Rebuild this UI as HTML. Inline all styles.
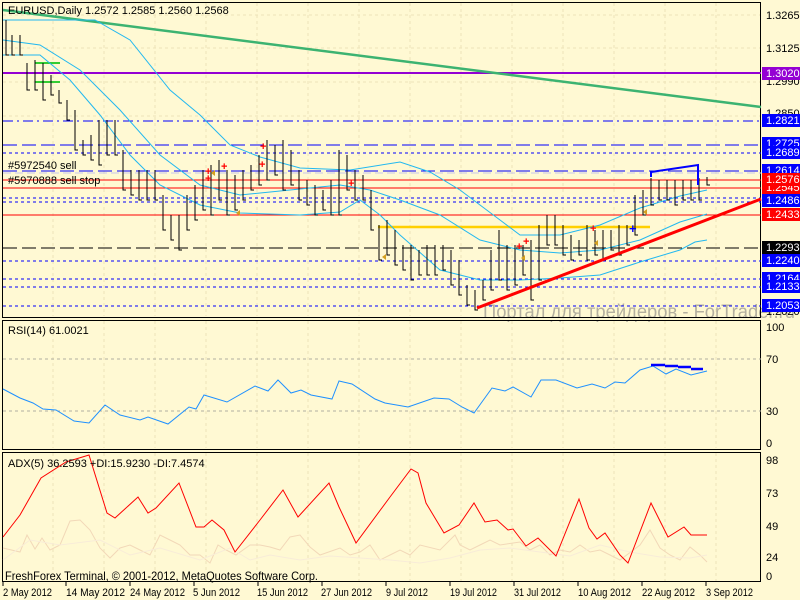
<!DOCTYPE html><html><head><meta charset="utf-8"><style>
body{margin:0;background:#FFF9D3;width:800px;height:600px;overflow:hidden;font-family:"Liberation Sans",sans-serif}
svg{display:block}
text{font-family:"Liberation Sans","DejaVu Sans",sans-serif;font-size:11px}
</style></head><body>
<svg width="800" height="600" viewBox="0 0 800 600" xmlns="http://www.w3.org/2000/svg">
<rect width="800" height="600" fill="#FFF9D3"/>
<g stroke="#EDE4B8" stroke-dasharray="3,3" stroke-width="1">
<path d="M53 3V316M104 3V316M155 3V316M206 3V316M257 3V316M308 3V316M359 3V316M410 3V316M461 3V316M512 3V316M563 3V316M614 3V316M665 3V316M716 3V316"/>
<path d="M53 321V448M104 321V448M155 321V448M206 321V448M257 321V448M308 321V448M359 321V448M410 321V448M461 321V448M512 321V448M563 321V448M614 321V448M665 321V448M716 321V448"/>
<path d="M53 453V581M104 453V581M155 453V581M206 453V581M257 453V581M308 453V581M359 453V581M410 453V581M461 453V581M512 453V581M563 453V581M614 453V581M665 453V581M716 453V581"/>
<path d="M3 15H760M3 48H760M3 82H760M3 116H760"/>
</g>
<text x="483" y="318" fill="#B4B0A0" style="font-size:19px" textLength="312" lengthAdjust="spacingAndGlyphs">Портал для трейдеров - ForTrader.ru</text>
<rect x="0" y="318" width="800" height="2" fill="#FFF9D3"/>
<g fill="none" stroke="#000" stroke-width="1">
<rect x="2.5" y="2.5" width="758" height="315"/>
<rect x="2.5" y="320.5" width="758" height="129"/>
<rect x="2.5" y="452.5" width="758" height="129"/>
</g>
<line x1="3" y1="73" x2="761" y2="73" stroke="#9400D3" stroke-width="2"/>
<line x1="3" y1="121" x2="761" y2="121" stroke="#0000FF" stroke-dasharray="10,4,2,4"/>
<line x1="3" y1="145" x2="761" y2="145" stroke="#0000FF" stroke-dasharray="14,5"/>
<line x1="3" y1="153" x2="761" y2="153" stroke="#0000FF" stroke-dasharray="3,3"/>
<line x1="3" y1="171" x2="761" y2="171" stroke="#0000FF" stroke-dasharray="14,5"/>
<line x1="3" y1="173" x2="761" y2="173" stroke="#C8C8E8" stroke-dasharray="8,4"/>
<line x1="3" y1="180" x2="761" y2="180" stroke="#FF0000"/>
<line x1="3" y1="188" x2="761" y2="188" stroke="#FF0000"/>
<line x1="3" y1="198" x2="761" y2="198" stroke="#0000FF" stroke-dasharray="3,3"/>
<line x1="3" y1="202" x2="761" y2="202" stroke="#0000FF" stroke-dasharray="3,3"/>
<line x1="3" y1="215" x2="761" y2="215" stroke="#FF0000"/>
<line x1="3" y1="248" x2="761" y2="248" stroke="#000" stroke-dasharray="14,5"/>
<line x1="3" y1="261" x2="761" y2="261" stroke="#0000FF" stroke-dasharray="3,3"/>
<line x1="3" y1="279" x2="761" y2="279" stroke="#0000FF" stroke-dasharray="3,3"/>
<line x1="3" y1="287" x2="761" y2="287" stroke="#0000FF" stroke-dasharray="3,3"/>
<line x1="3" y1="306" x2="761" y2="306" stroke="#0000FF" stroke-dasharray="3,3"/>
<line x1="3" y1="10" x2="761" y2="107" stroke="#3CB371" stroke-width="2.5"/>
<path d="M35 63H60M35 82H60" stroke="#33CC33" stroke-width="2"/>
<line x1="378" y1="227" x2="650" y2="227" stroke="#FFD000" stroke-width="2.5"/>
<g fill="none" stroke="#22B8F0" stroke-width="1">
<polyline points="3,20 95,20 130,40 170,90 200,115 230,145 260,157 300,168 350,170 400,162 430,172 460,190 500,220 520,235 560,235 600,225 640,208 680,196 707,190"/>
<polyline points="3,40 40,45 80,70 120,110 160,155 200,185 240,195 290,190 340,185 370,190 400,200 440,215 480,240 520,250 560,253 600,250 640,240 680,222 707,214"/>
<polyline points="3,55 40,55 70,80 100,115 130,155 160,185 200,205 240,213 300,215 340,212 360,200 380,215 400,235 440,270 480,280 520,280 560,278 600,275 640,262 680,250 695,242 707,240"/>
</g>
<path fill="none" stroke="#000" stroke-width="1" d="M6 20V55h3M12 35V55h3M20 35V55h3M27 63V90h3M35 60V90h3M43 63V100h3M51 75V95h3M59 90V103h3M67 100V120h3M75 110V150h3M83 140V155h3M91 135V160h3M99 120V165h3M107 120V155h3M115 120V155h3M123 150V190h3M131 170V195h3M139 170V200h3M147 170V200h3M155 170V200h3M163 195V230h3M171 215V240h3M179 215V250h3M187 195V230h3M195 185V220h3M203 170V210h3M211 165V215h3M219 160V200h3M227 170V215h3M235 175V210h3M243 170V200h3M251 165V190h3M259 155V185h3M267 140V180h3M275 145V175h3M283 140V190h3M291 150V185h3M299 170V200h3M307 180V205h3M315 185V215h3M323 190V210h3M331 180V215h3M339 150V215h3M347 155V190h3M355 170V200h3M363 175V200h3M371 190V230h3M379 225V260h3M387 220V255h3M395 230V265h3M403 245V270h3M411 245V280h3M419 250V275h3M427 245V275h3M435 245V275h3M443 245V270h3M451 250V285h3M459 260V295h3M467 285V305h3M475 290V310h3M483 280V300h3M491 250V290h3M499 230V280h3M507 245V290h3M515 245V285h3M523 245V275h3M531 240V300h3M539 225V280h3M547 215V245h3M555 215V245h3M563 225V255h3M571 235V260h3M579 240V255h3M587 225V260h3M595 230V255h3M603 230V260h3M611 230V250h3M619 225V255h3M627 225V245h3M635 195V235h3M643 190V215h3M651 178V205h3M659 180V200h3M667 180V200h3M675 180V205h3M683 180V200h3M691 180V200h3M699 178V200h3M707 177V185h3"/>
<polyline points="651,177 651,172 698,165 698,185" fill="none" stroke="#0000FF" stroke-width="2"/>
<line x1="477" y1="308" x2="761" y2="199" stroke="#FF0000" stroke-width="3"/>
<g fill="#FF0000" style="font-size:13px;font-weight:bold">
<text x="205" y="175">+</text><text x="205" y="182">+</text><text x="221" y="170">+</text><text x="260" y="150">+</text><text x="259" y="168">+</text><text x="348" y="187">+</text><text x="516" y="250">+</text><text x="523" y="245">+</text><text x="590" y="232">+</text>
</g>
<g fill="#D4A020"><path d="M215 170l-4 3 4 3zM240 210l-4 3 4 3zM386 254l-4 3 4 3zM647 209l-4 3 4 3zM525 255l-4 3 4 3zM598 240l-4 3 4 3z"/></g>
<text x="629" y="233" fill="#0000FF" style="font-size:13px;font-weight:bold">+</text>
<text x="8" y="14" fill="#000">EURUSD,Daily  1.2572 1.2585 1.2560 1.2568</text>
<text x="8" y="169" fill="#000">#5972540 sell</text>
<text x="8" y="184" fill="#000">#5970888 sell stop</text>
<g fill="#000">
<text x="766" y="19">1.3265</text><text x="766" y="52">1.3125</text><text x="766" y="85">1.2990</text><text x="766" y="117">1.2850</text><text x="766" y="315">1.2020</text>
<path d="M761 15h3M761 48h3M761 82h3M761 114h3"/>
</g>
<g fill="#fff">
<rect x="762" y="67" width="38" height="13" fill="#9400D3"/><text x="766" y="77">1.3020</text>
<rect x="762" y="114" width="38" height="13" fill="#0000FF"/><text x="766" y="124">1.2821</text>
<rect x="762" y="137" width="38" height="13" fill="#0000FF"/><text x="766" y="147">1.2725</text>
<rect x="762" y="146" width="38" height="13" fill="#0000FF"/><text x="766" y="156">1.2689</text>
<rect x="762" y="164" width="38" height="13" fill="#0000FF"/><text x="766" y="174">1.2614</text>
<rect x="762" y="181" width="38" height="13" fill="#FF0000"/><text x="766" y="191">1.2545</text>
<rect x="762" y="173" width="38" height="13" fill="#FF0000"/><text x="766" y="183">1.2576</text>
<rect x="762" y="194" width="38" height="13" fill="#0000FF"/><text x="766" y="204">1.2486</text>
<rect x="762" y="208" width="38" height="13" fill="#FF0000"/><text x="766" y="218">1.2433</text>
<rect x="762" y="241" width="38" height="13" fill="#000"/><text x="766" y="251">1.2293</text>
<rect x="762" y="254" width="38" height="13" fill="#0000FF"/><text x="766" y="264">1.2240</text>
<rect x="762" y="272" width="38" height="13" fill="#0000FF"/><text x="766" y="282">1.2164</text>
<rect x="762" y="280" width="38" height="13" fill="#0000FF"/><text x="766" y="290">1.2133</text>
<rect x="762" y="299" width="38" height="13" fill="#0000FF"/><text x="766" y="309">1.2053</text>
</g>
<path d="M3 359H761M3 411H761" stroke="#B0B0A0" stroke-dasharray="3,3"/>
<text x="8" y="334" fill="#000">RSI(14) 61.0021</text>
<polyline fill="none" stroke="#1E90FF" points="3,389 20,398 33,403 43,409 56,410 74,421 89,423 105,405 120,415 140,420 148,417 168,424 189,407 196,409 204,395 227,402 255,386 268,391 278,380 291,393 301,390 311,395 332,399 339,381 352,384 375,399 385,403 408,407 434,398 449,399 462,407 474,413 492,388 505,391 513,387 531,397 541,380 556,380 577,388 592,384 605,388 615,382 625,383 640,370 653,366 666,374 676,369 691,375 707,371"/>
<path d="M651 365h14M665 366h13M678 367h13M691 369h12" stroke="#0000FF" stroke-width="2.5"/>
<g fill="#000"><text x="766" y="331">100</text><text x="766" y="363">70</text><text x="766" y="415">30</text><text x="766" y="447">0</text></g>
<polyline fill="none" stroke="#F2D8B8" points="3,548 20,552 27,535 35,549 42,538 50,550 60,545 70,521 80,520 90,530 100,548 110,558 120,548 130,545 140,550 150,555 160,535 170,540 180,545 190,555 200,555 210,563 218,545 226,550 236,555 250,545 260,545 270,547 280,550 290,537 300,535 310,547 320,555 340,548 350,555 360,552 370,545 380,560 390,555 400,550 410,555 420,545 440,550 455,535 460,545 470,550 480,545 490,540 500,545 520,542 530,550 540,545 550,555 560,550 570,552 580,545 590,552 600,550 610,555 620,560 640,545 650,530 660,548 670,555 680,560 690,547 700,555 707,562"/>
<polyline fill="none" stroke="#F8ECD8" points="3,560 30,540 60,545 100,540 130,555 160,548 200,560 230,548 250,560 270,555 300,560 330,556 360,558 390,560 420,563 450,558 480,550 510,548 540,552 570,556 600,545 630,552 660,557 690,558 707,555"/>
<polyline fill="none" stroke="#FF0000" points="3,537 20,515 41,478 66,462 89,455 107,513 115,518 138,497 148,513 156,508 179,483 196,527 204,527 212,520 224,530 235,552 260,520 283,490 298,517 329,483 339,507 356,543 390,497 411,469 418,473 426,503 444,533 459,525 474,503 485,522 497,520 508,530 513,529 526,546 538,538 556,556 579,499 589,528 597,539 605,533 620,555 628,563 651,503 668,537 684,527 691,535 707,535"/>
<text x="8" y="467" fill="#000">ADX(5) 36.2593 +DI:15.9230 -DI:7.4574</text>
<text x="5" y="580" fill="#000" style="font-size:12px" textLength="313" lengthAdjust="spacingAndGlyphs">FreshForex Terminal, © 2001-2012, MetaQuotes Software Corp.</text>
<g fill="#000"><text x="766" y="464">98</text><text x="766" y="497">73</text><text x="766" y="530">49</text><text x="766" y="561">24</text><text x="766" y="580">0</text></g>
<g fill="#000">
<text x="3" y="596" textLength="49" lengthAdjust="spacingAndGlyphs">2 May 2012</text>
<text x="66" y="596" textLength="59" lengthAdjust="spacingAndGlyphs">14 May 2012</text>
<text x="130" y="596" textLength="55" lengthAdjust="spacingAndGlyphs">24 May 2012</text>
<text x="193" y="596" textLength="47" lengthAdjust="spacingAndGlyphs">5 Jun 2012</text>
<text x="257" y="596" textLength="51" lengthAdjust="spacingAndGlyphs">15 Jun 2012</text>
<text x="321" y="596" textLength="51" lengthAdjust="spacingAndGlyphs">27 Jun 2012</text>
<text x="386" y="596" textLength="42" lengthAdjust="spacingAndGlyphs">9 Jul 2012</text>
<text x="450" y="596" textLength="47" lengthAdjust="spacingAndGlyphs">19 Jul 2012</text>
<text x="514" y="596" textLength="47" lengthAdjust="spacingAndGlyphs">31 Jul 2012</text>
<text x="578" y="596" textLength="53" lengthAdjust="spacingAndGlyphs">10 Aug 2012</text>
<text x="642" y="596" textLength="53" lengthAdjust="spacingAndGlyphs">22 Aug 2012</text>
<text x="706" y="596" textLength="47" lengthAdjust="spacingAndGlyphs">3 Sep 2012</text>
</g>
<path d="M3 582v4M66 582v4M130 582v4M194 582v4M258 582v4M322 582v4M386 582v4M450 582v4M514 582v4M578 582v4M642 582v4M706 582v4" stroke="#000"/>
</svg>
</body></html>
